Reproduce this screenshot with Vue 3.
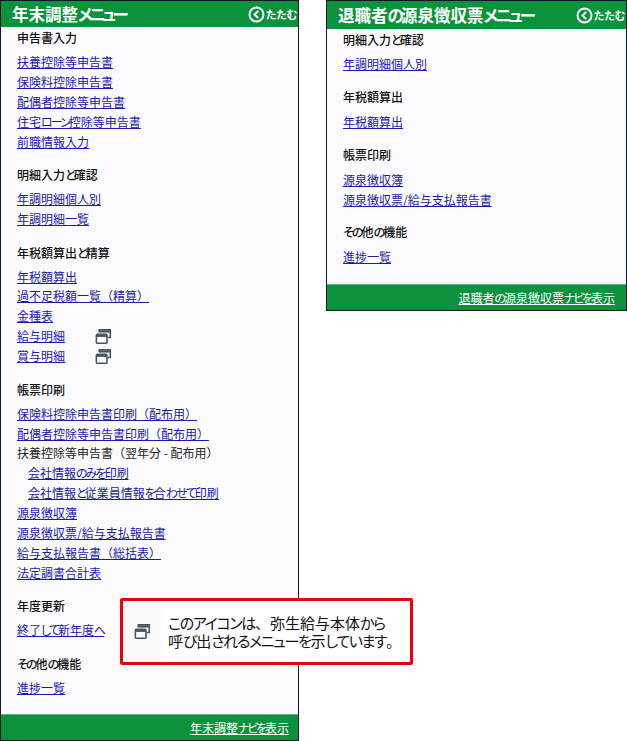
<script setup>
const leftSections = [
  { title: '申告書入力', items: [
    { t: '扶養控除等申告書' }, { t: '保険料控除申告書' }, { t: '配偶者控除等申告書' }, { t: '住宅ローン控除等申告書' }, { t: '前職情報入力' } ] },
  { title: '明細入力と確認', items: [ { t: '年調明細個人別' }, { t: '年調明細一覧' } ] },
  { title: '年税額算出と精算', items: [
    { t: '年税額算出' }, { t: '過不足税額一覧（精算）' }, { t: '金種表' }, { t: '給与明細', icon: true }, { t: '賞与明細', icon: true } ] },
  { title: '帳票印刷', items: [
    { t: '保険料控除申告書印刷（配布用）' }, { t: '配偶者控除等申告書印刷（配布用）' },
    { t: '扶養控除等申告書（翌年分 - 配布用）', plain: true },
    { t: '会社情報のみを印刷', indent: true }, { t: '会社情報と従業員情報を合わせて印刷', indent: true },
    { t: '源泉徴収簿' }, { t: '源泉徴収票/給与支払報告書' }, { t: '給与支払報告書（総括表）' }, { t: '法定調書合計表' } ] },
  { title: '年度更新', items: [ { t: '終了して新年度へ' } ] },
  { title: 'その他の機能', items: [ { t: '進捗一覧' } ] },
]
const rightSections = [
  { title: '明細入力と確認', items: [ { t: '年調明細個人別' } ] },
  { title: '年税額算出', items: [ { t: '年税額算出' } ] },
  { title: '帳票印刷', items: [ { t: '源泉徴収簿' }, { t: '源泉徴収票/給与支払報告書' } ] },
  { title: 'その他の機能', items: [ { t: '進捗一覧' } ] },
]
const panels = [
  { cls: 'left', title: '年末調整メニュー', sections: leftSections, foot: '年末調整ナビを表示' },
  { cls: 'right', title: '退職者の源泉徴収票メニュー', sections: rightSections, foot: '退職者の源泉徴収票ナビを表示' },
]
// The reference face sets kana narrower than kanji: split runs so kana can be condensed.
const parts = (t) => t.split(/([\u3040-\u30ff]+)/).filter(Boolean).map((s) => ({ s, k: /^[\u3040-\u30ff]/.test(s) }))
const noteLines = ['このアイコンは、弥生給与本体から', '呼び出されるメニューを示しています。']
</script>

<template>
  <div class="page">
    <section v-for="p in panels" :key="p.cls" class="panel" :class="p.cls">
      <header class="head">
        <h2 class="title"><span v-for="(x, n) in parts(p.title)" :key="n" :class="{ kana: x.k }">{{ x.s }}</span></h2>
        <a class="fold" href="#">
          <svg class="chev" viewBox="0 0 16 16" width="17" height="17">
            <circle cx="8" cy="8" r="6.6" fill="none" stroke="#fff" stroke-width="1.8" />
            <path d="M9.6 4.6 6.2 8l3.4 3.4" fill="none" stroke="#fff" stroke-width="1.9" />
          </svg>
          <span>たたむ</span>
        </a>
      </header>
      <div class="body">
        <div v-for="s in p.sections" :key="s.title" class="sec">
          <h3 class="sec-title"><span v-for="(x, n) in parts(s.title)" :key="n" :class="{ kana: x.k }">{{ x.s }}</span></h3>
          <ul class="list">
            <li v-for="i in s.items" :key="i.t" class="row" :class="{ indent: i.indent }">
              <component :is="i.plain ? 'span' : 'a'" :class="i.plain ? 'plain' : 'link'" :href="i.plain ? undefined : '#'"><span v-for="(x, n) in parts(i.t)" :key="n" :class="{ kana: x.k }">{{ x.s }}</span></component>
              <svg v-if="i.icon" class="win" viewBox="0 0 16 16" width="17" height="17">
                <path d="M4 4V1.6h10.4V9H12" fill="none" stroke="#4a5563" stroke-width="1.5" />
                <path d="M4 3.2h10" stroke="#4a5563" stroke-width="2.2" />
                <rect x="1.3" y="6" width="10" height="8.4" rx="1" fill="#fff" stroke="#4a5563" stroke-width="1.5" />
                <path d="M1.3 7.2h10" stroke="#4a5563" stroke-width="2.4" />
              </svg>
            </li>
          </ul>
        </div>
      </div>
      <footer class="foot"><a href="#"><span v-for="(x, n) in parts(p.foot)" :key="n" :class="{ kana: x.k }">{{ x.s }}</span></a></footer>
    </section>

    <aside class="note">
      <div class="note-icon">
        <svg class="win" viewBox="0 0 16 16" width="17" height="17">
          <path d="M4 4V1.6h10.4V9H12" fill="none" stroke="#4a5563" stroke-width="1.5" />
          <path d="M4 3.2h10" stroke="#4a5563" stroke-width="2.2" />
          <rect x="1.3" y="6" width="10" height="8.4" rx="1" fill="#fff" stroke="#4a5563" stroke-width="1.5" />
          <path d="M1.3 7.2h10" stroke="#4a5563" stroke-width="2.4" />
        </svg>
      </div>
      <p class="note-text">
        <span v-for="l in noteLines" :key="l" class="note-line"><span v-for="(x, n) in parts(l)" :key="n" :class="{ kana: x.k }">{{ x.s }}</span></span>
      </p>
    </aside>
  </div>
</template>

<style>
html, body { margin: 0; background: #fff; }
</style>

<style scoped>
.page {
  position: relative;
  width: 627px;
  height: 741px;
  display: flex;
  align-items: flex-start;
  gap: 27px;
  font-family: "Noto Sans CJK JP", "Noto Sans", sans-serif;
  font-size: 12px;
  color: #111;
  overflow: hidden;
}
.kana {
  font-feature-settings: "palt";
  letter-spacing: -0.16em;
}
.panel {
  display: flex;
  flex-direction: column;
  box-sizing: border-box;
  border: 1px solid #0a1a2c;
  background: #fbfbfd;
}
.left { width: 299px; height: 741px; }
.right { width: 301px; height: 311px; }
.head {
  display: flex;
  align-items: center;
  justify-content: space-between;
  background: #0a933c;
  color: #fff;
  height: 26px;
  padding: 0 1px 0 11px;
  flex: none;
}
.right .head { height: 28px; }
.title {
  margin: 0;
  font-size: 16.5px;
  font-weight: 700;
  line-height: 26px;
  white-space: nowrap;
}
.title .kana { letter-spacing: -0.21em; }
.right .title .kana { letter-spacing: -0.17em; }
.fold {
  display: flex;
  align-items: center;
  gap: 1px;
  color: #fff;
  text-decoration: none;
  font-size: 11px;
  font-weight: 700;
  letter-spacing: -0.5px;
}
.body {
  flex: 1;
  padding-left: 16px;
}
.right .body { padding-top: 0.5px; }
.sec { margin-bottom: 12.7px; }
.sec-title {
  margin: 0 0 4px;
  padding-top: 1px;
  font-size: 12px;
  font-weight: 500;
  line-height: 20px;
  color: #111;
}
.right .sec-title { margin-bottom: 5px; padding-top: 0; }
.list { list-style: none; margin: 0; padding: 0; }
.row {
  display: flex;
  align-items: center;
  height: 19.9px;
  line-height: 20px;
}
.indent { padding-left: 11px; }
.link { color: #1a1aa6; text-decoration: underline; white-space: nowrap; }
.plain { color: #222; white-space: nowrap; }
.win { flex: none; }
.row .win { margin-left: 30px; }
.foot {
  flex: none;
  height: 26px;
  background: #0a933c;
  border-top: 1px solid #5cb87e;
  box-sizing: border-box;
  display: flex;
  align-items: center;
  justify-content: flex-end;
  padding-right: 11px;
  font-size: 12px;
}
.left .foot { padding-right: 9px; }
.foot a { color: #fff; text-decoration: underline; }
.foot .kana { letter-spacing: -0.18em; }
.note {
  position: absolute;
  left: 120px;
  top: 598px;
  width: 293px;
  height: 67px;
  box-sizing: border-box;
  border: 3px solid #e0060f;
  border-radius: 2px;
  background: #fff;
  display: flex;
  align-items: center;
}
.note-icon {
  width: 38px;
  height: 61px;
  background: #f9f9fa;
  display: flex;
  align-items: center;
  justify-content: center;
  flex: none;
}
.note-text {
  margin: 0 0 0 7px;
  font-size: 15px;
  line-height: 18px;
  color: #111;
  white-space: nowrap;
}
.note-line { display: block; }
.note-text .kana { letter-spacing: -0.09em; }
</style>
